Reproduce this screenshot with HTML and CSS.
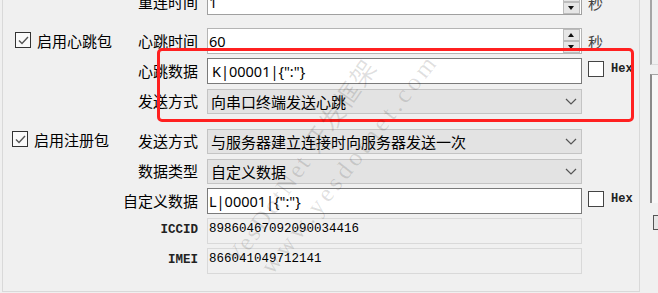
FILE: index.html
```html
<!DOCTYPE html>
<html>

<head>
    <meta charset="utf-8" />
    <title>通讯设置</title>
    <link rel="stylesheet" href="styles.css">
</head>

<body>
    <div class="page">
        <!-- 参数分组框 -->
        <div class="group">
            <div class="row">
                <span></span>
                <label class="lbl">重连时间</label>
                <div class="box spin-box">
                    <span class="num">1</span>
                    <div class="spin"><b class="up"></b><b class="down"></b></div>
                </div>
                <span class="unit">秒</span>
            </div>

            <div class="row sec">
                <label class="check c1"><i class="tick"><svg width="11" height="9" viewBox="0 0 11 9"><polyline points="1,4.5 4,7.5 10,1" fill="none" stroke="#555" stroke-width="1.4"/></svg></i>启用心跳包</label>
                <label class="lbl">心跳时间</label>
                <div class="box spin-box light">
                    <span class="num">60</span>
                    <div class="spin"><b class="up"></b><b class="down"></b></div>
                </div>
                <span class="unit">秒</span>
            </div>

            <div class="row">
                <span></span>
                <label class="lbl">心跳数据</label>
                <div class="box text">K|00001|{":"}</div>
                <label class="hex"><i class="hex-box"></i>Hex</label>
            </div>

            <div class="row">
                <span></span>
                <label class="lbl">发送方式</label>
                <div class="combo"><span>向串口终端发送心跳</span><svg width="12" height="7" viewBox="0 0 12 7"><polyline points="1,1 6,6 11,1" fill="none" stroke="#555" stroke-width="1.2"/></svg></div>
            </div>

            <div class="row sec2">
                <label class="check c2"><i class="tick"><svg width="11" height="9" viewBox="0 0 11 9"><polyline points="1,4.5 4,7.5 10,1" fill="none" stroke="#555" stroke-width="1.4"/></svg></i>启用注册包</label>
                <label class="lbl">发送方式</label>
                <div class="combo"><span>与服务器建立连接时向服务器发送一次</span><svg width="12" height="7" viewBox="0 0 12 7"><polyline points="1,1 6,6 11,1" fill="none" stroke="#555" stroke-width="1.2"/></svg></div>
            </div>

            <div class="row">
                <span></span>
                <label class="lbl">数据类型</label>
                <div class="combo"><span>自定义数据</span><svg width="12" height="7" viewBox="0 0 12 7"><polyline points="1,1 6,6 11,1" fill="none" stroke="#555" stroke-width="1.2"/></svg></div>
            </div>

            <div class="row">
                <span></span>
                <label class="lbl">自定义数据</label>
                <div class="box text custom">L|00001|{":"}</div>
                <label class="hex"><i class="hex-box"></i>Hex</label>
            </div>

            <div class="row">
                <span></span>
                <label class="lbl mono">ICCID</label>
                <div class="readonly">89860467092090034416</div>
            </div>

            <div class="row">
                <span></span>
                <label class="lbl mono">IMEI</label>
                <div class="readonly">866041049712141</div>
            </div>
        </div>

        <!-- 右侧相邻面板的边缘 -->
        <div class="side">
            <div class="side-top"></div>
            <div class="side-list"></div>
            <div class="side-btn"></div>
        </div>
    </div>

    <!-- 标注框与水印 -->
    <div class="mark"></div>
    <div class="wm-layer">
        <span class="wm wm1">YesDotNet 开发框架</span>
        <span class="wm wm2">www.yesdotnet.com</span>
    </div>
</body>

</html>
```

FILE: styles.css
```css
html {
  overflow: hidden;
}

body {
  margin: 0;
  width: 658px;
  height: 293px;
  overflow: hidden;
  background: #f0f0f0;
  font: 15px "Noto Sans CJK SC", "Noto Sans", sans-serif;
  color: #000;
  position: relative;
}

.page {
  display: flex;
  margin-top: -14px;
}

/* 分组框，顶部在可视区之外 */
.group {
  box-sizing: border-box;
  margin-left: 2px;
  width: 640px;
  height: 306px;
  padding-top: 3px;
  border: 1px solid #d9d9d9;
  border-top: none;
}

.row {
  display: grid;
  grid-template-columns: 117px 87px 375px auto;
  height: 26px;
  align-items: center;
  margin-top: 4px;
}

.row:first-child {
  margin-top: 0;
}

.row.sec {
  margin-top: 13px;
}

.row.sec2 {
  margin-top: 14px;
}

.lbl {
  text-align: right;
  padding-right: 9px;
  white-space: nowrap;
  line-height: 26px;
}

.lbl.mono {
  font: 12.5px "Liberation Mono", monospace;
  font-weight: bold;
  color: #222;
  align-self: start;
  line-height: 24px;
}

/* 复选框 */
.check {
  display: flex;
  align-items: center;
  white-space: nowrap;
}

.check.c1 {
  padding-left: 12px;
  margin-top: -2px;
}

.check.c2 {
  padding-left: 9px;
  margin-top: -4px;
}

.tick {
  box-sizing: border-box;
  width: 16px;
  height: 16px;
  border: 1px solid #333;
  background: #fafafa;
  margin-right: 6px;
  display: flex;
  align-items: center;
  justify-content: center;
}

/* 文本框 */
.box {
  box-sizing: border-box;
  height: 26px;
  background: #fff;
  border: 1px solid #7a7a7a;
  display: flex;
  align-items: center;
  font-family: "Noto Sans", sans-serif;
  font-size: 14.5px;
}

.box.light {
  border-color: #b4b4b4;
}

.box.text {
  padding-left: 4px;
}

.box.custom {
  padding-left: 1px;
}

.spin-box {
  justify-content: space-between;
  padding: 0 1px 0 1px;
  border-color: #a0a0a0;
}

.num {
  line-height: 1;
}

.spin {
  display: flex;
  flex-direction: column;
  width: 17px;
}

.spin b {
  box-sizing: border-box;
  height: 12px;
  background: #e6e6e6;
  border: 1px solid #bcbcbc;
  position: relative;
}

.spin b::after {
  content: "";
  position: absolute;
  left: 4px;
  top: 3px;
  border-left: 3.5px solid transparent;
  border-right: 3.5px solid transparent;
}

.spin .up::after {
  border-bottom: 4px solid #111;
}

.spin .down::after {
  border-top: 4px solid #111;
}

.unit {
  padding-left: 6px;
  color: #444;
}

/* Hex 复选框 */
.hex {
  display: flex;
  align-items: center;
  padding-left: 6px;
  margin-top: -4px;
  font: bold 12px "Liberation Mono", monospace;
  color: #222;
}

.hex-box {
  box-sizing: border-box;
  width: 16px;
  height: 16px;
  border: 1px solid #444;
  background: #fff;
  margin-right: 7px;
}

/* 下拉框 */
.combo {
  box-sizing: border-box;
  height: 25px;
  background: #e3e3e3;
  border: 1px solid #c4c4c4;
  display: flex;
  align-items: center;
  justify-content: space-between;
  padding: 0 4px 0 3px;
  white-space: nowrap;
}

/* 只读框 */
.readonly {
  box-sizing: border-box;
  height: 26px;
  border: 1px solid #d9d9d9;
  padding: 3px 0 0 1px;
  align-self: start;
  font: 12.5px "Liberation Mono", monospace;
}

/* 右侧面板边缘 */
.side {
  margin-left: 10px;
  display: flex;
  flex-direction: column;
  padding-top: 14px;
}

.side-top {
  width: 6px;
  height: 64px;
  border-left: 2px solid #a5a5a5;
  border-bottom: 1px solid #dcdcdc;
}

.side-list {
  width: 6px;
  height: 128px;
  margin-top: 9px;
  border-left: 2px solid #8a8a8a;
  border-top: 1px solid #a5a5a5;
  background: #f7f7f7;
}

.side-btn {
  width: 4px;
  height: 13px;
  margin: 12px 0 0 3px;
  border: 1px solid #555;
  border-right: none;
  background: #e6e6e6;
}

/* 红色标注框 */
.mark {
  position: absolute;
  left: 157px;
  top: 48px;
  width: 477px;
  height: 74px;
  box-sizing: border-box;
  border: 3px solid #ff2020;
  border-radius: 5px;
}

/* 水印 */
.wm-layer {
  position: absolute;
  left: 0;
  top: 0;
  width: 658px;
  height: 293px;
  overflow: hidden;
  pointer-events: none;
}

.wm {
  position: absolute;
  color: rgba(0, 0, 0, 0.12);
  font: 25px "Liberation Serif", "Noto Sans CJK SC", serif;
  white-space: nowrap;
  transform-origin: 0 0;
  transform: rotate(-55deg);
  letter-spacing: 2px;
}

.wm1 {
  left: 215px;
  top: 250px;
}

.wm2 {
  left: 255px;
  top: 262px;
  transform: rotate(-52deg);
  letter-spacing: 4px;
}
```
